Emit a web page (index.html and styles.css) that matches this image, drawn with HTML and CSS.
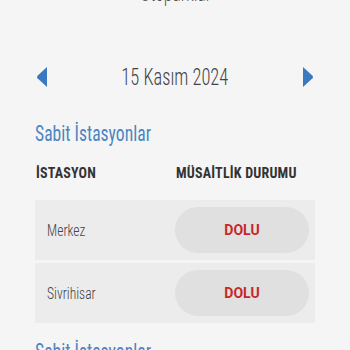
FILE: index.html
```html
<!DOCTYPE html>
<html lang="tr">
<head>
<meta charset="utf-8">
<link rel="stylesheet" href="styles.css">
</head>
<body>
<div class="page">
  <div class="top-title"><span class="narrow">Otoparklar</span></div>
  <div class="date-nav">
    <button class="arrow" aria-label="Önceki">
      <svg width="12" height="22" viewBox="0 0 12 22"><path d="M11 1 L11 21 L1.5 12.2 Q0.5 11 1.5 9.8 Z" fill="#3a78bf"/></svg>
    </button>
    <div class="date narrow">15 Kasım 2024</div>
    <button class="arrow" aria-label="Sonraki">
      <svg width="12" height="22" viewBox="0 0 12 22"><path d="M1 1 L1 21 L10.5 12.2 Q11.5 11 10.5 9.8 Z" fill="#3a78bf"/></svg>
    </button>
  </div>
  <h2 class="section-title"><span class="narrow left">Sabit İstasyonlar</span></h2>
  <div class="table-head">
    <div class="col-name">İSTASYON</div>
    <div class="col-status">MÜSAİTLİK DURUMU</div>
  </div>
  <div class="table">
    <div class="row">
      <div class="name"><span class="narrow left">Merkez</span></div>
      <div class="pill">DOLU</div>
    </div>
    <div class="row">
      <div class="name"><span class="narrow left">Sivrihisar</span></div>
      <div class="pill">DOLU</div>
    </div>
  </div>
  <h2 class="section-title next"><span class="narrow left">Sabit İstasyonlar</span></h2>
</div>
</body>
</html>
```
FILE: styles.css
```css
html, body {
  margin: 0;
  padding: 0;
  background: #f5f5f5;
  overflow: hidden;
}
.page {
  width: 350px;
  height: 350px;
  overflow: hidden;
  font-family: "Roboto Condensed", "Liberation Sans Narrow", "DejaVu Sans Condensed", sans-serif;
}
.narrow {
  display: inline-block;
  transform: scaleX(0.8);
  transform-origin: center;
  white-space: nowrap;
}
.narrow.left {
  transform-origin: left center;
}
.top-title {
  margin-top: -18px;
  height: 24px;
  line-height: 24px;
  text-align: center;
  font-size: 22px;
  font-weight: 300;
  color: #555;
}
.date-nav {
  margin-top: 60px;
  height: 22px;
  display: flex;
  align-items: center;
  justify-content: space-between;
  padding: 0 36px 0 36px;
}
.arrow {
  border: 0;
  background: none;
  padding: 0;
  width: 12px;
  height: 22px;
  display: flex;
}
.date {
  font-size: 23px;
  color: #444;
  font-weight: 300;
}
.section-title {
  margin: 33px 0 0 35px;
  font-size: 22px;
  font-weight: 400;
  color: #4b86c1;
  line-height: 26px;
  height: 26px;
}
.table-head {
  display: flex;
  margin: 18px 0 0 36px;
  font-size: 14px;
  font-weight: 700;
  color: #333;
  height: 16px;
  line-height: 16px;
  letter-spacing: 0.2px;
}
.col-name { width: 140px; }
.table {
  margin: 19px 35px 0 35px;
  display: flex;
  flex-direction: column;
  gap: 3px;
}
.row {
  background: #ececec;
  height: 60px;
  display: flex;
  align-items: center;
  padding: 0 6px 0 12px;
}
.name {
  flex: 1;
  font-size: 17px;
  font-weight: 300;
  color: #444;
}
.pill {
  width: 134px;
  height: 46px;
  border-radius: 23px;
  background: #e0e0e0;
  display: flex;
  align-items: center;
  justify-content: center;
  font-family: Roboto, "Liberation Sans", sans-serif;
  font-weight: 700;
  font-size: 14px;
  color: #c62828;
}
.section-title.next {
  margin-top: 16px;
}
```
